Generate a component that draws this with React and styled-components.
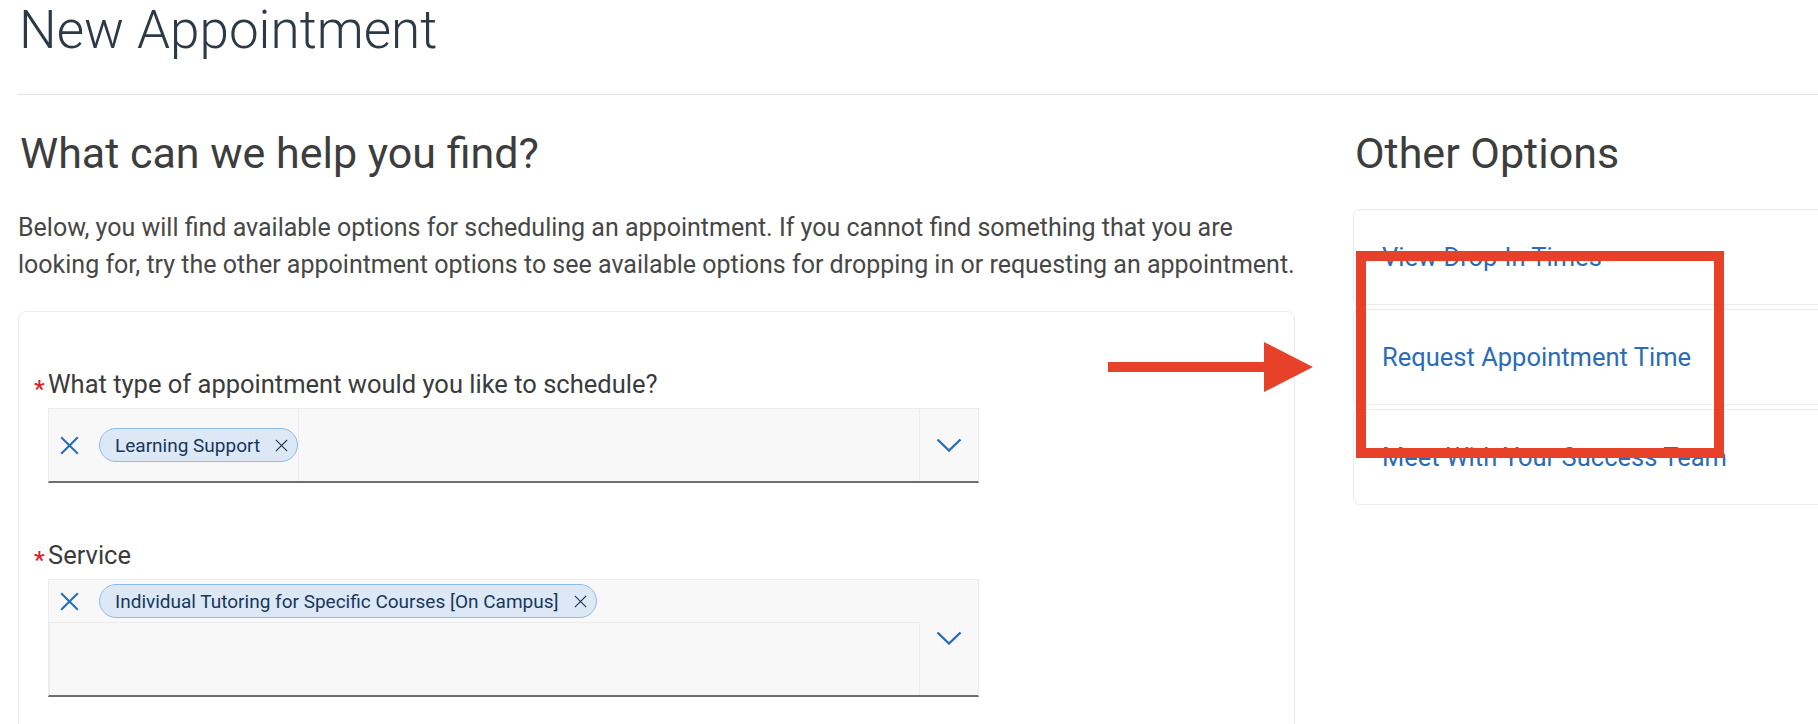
import React from "react";
import styled, { createGlobalStyle } from "styled-components";

const GlobalStyle = createGlobalStyle`
  html, body {
    margin: 0;
    padding: 0;
    background: #ffffff;
    overflow: hidden;
  }
  body {
    font-family: Roboto, "Liberation Sans", Arial, sans-serif;
    -webkit-font-smoothing: antialiased;
  }
  * { box-sizing: border-box; }
`;

const Page = styled.div`
  position: relative;
  width: 2000px;
  padding-left: 18px;
`;

const PageTitle = styled.h1`
  margin: 0;
  font-size: 53px;
  line-height: 60px;
  font-weight: 300;
  color: #2c3a47;
  padding-left: 1px;
`;

const Divider = styled.div`
  margin-top: 34px;
  height: 1px;
  background: #e1e1e1;
`;

const Columns = styled.div`
  display: grid;
  grid-template-columns: 1277px 560px;
  column-gap: 58px;
  padding-top: 32px;
`;

const Column = styled.section`
  display: flex;
  flex-direction: column;
`;

const SectionHeading = styled.h2`
  margin: 0;
  font-size: 43px;
  line-height: 52px;
  font-weight: 400;
  color: #3d3d3d;
  padding-left: 2px;
`;

const Intro = styled.p`
  margin: 30px 0 28px;
  font-size: 25px;
  line-height: 37px;
  color: #474747;
  white-space: nowrap;
`;

const FormCard = styled.div`
  border: 1px solid #ebebeb;
  border-radius: 8px;
  padding: 57px 0 60px 29px;
`;

const Field = styled.div`
  width: 931px;
  & + & {
    margin-top: 57px;
  }
`;

const Label = styled.label`
  display: flex;
  align-items: flex-start;
  margin-left: -14px;
  margin-bottom: 9px;
  font-size: 25.5px;
  line-height: 30px;
  color: #3b3b3b;
`;

const Required = styled.span`
  width: 14px;
  flex: none;
  color: #d8232a;
  font-size: 24px;
  font-weight: 500;
  line-height: 30px;
  position: relative;
  top: 5px;
`;

const SelectShell = styled.div`
  position: relative;
  display: flex;
  flex-wrap: wrap;
  align-items: center;
  background: #f8f8f8;
  border: 1px solid #ececec;
  border-bottom: 2px solid #6e6e6e;
  padding-right: 58px;
`;

const ClearButton = styled.span`
  display: inline-flex;
  width: 19px;
  height: 19px;
  margin: 0 20px 0 11px;
  color: #2a6ebb;
`;

const Chip = styled.span`
  display: inline-flex;
  align-items: center;
  gap: 15px;
  height: 34px;
  margin: 4px 0;
  padding: 0 9px 0 15px;
  border: 1px solid #8ebdea;
  border-radius: 17px;
  background: #dce8f6;
  color: #17375c;
  font-size: 19px;
  white-space: nowrap;
`;

const ChipRemove = styled.span`
  display: inline-flex;
  width: 13px;
  height: 13px;
  color: #1f3450;
`;

const TextEntry = styled.div`
  flex: 1 1 350px;
  align-self: stretch;
  height: ${(p) => (p.$wrapped ? "73px" : "72px")};
  border-left: 1px solid #ececec;
  border-right: 1px solid #ececec;
  border-top: ${(p) => (p.$wrapped ? "1px solid #ececec" : "none")};
`;

const Toggle = styled.span`
  position: absolute;
  top: 0;
  right: 0;
  bottom: 0;
  width: 58px;
  display: flex;
  align-items: center;
  justify-content: center;
  color: #2a6ebb;
`;

const OptionList = styled.div`
  margin-top: 30px;
  display: flex;
  flex-direction: column;
  gap: 4px;
`;

const OptionRow = styled.a`
  display: flex;
  align-items: center;
  height: 96px;
  padding-left: 28px;
  border: 1px solid #ebebeb;
  border-radius: 6px;
  font-size: 25.5px;
  color: #2b6cb5;
  text-decoration: none;
`;

const Highlight = styled.div`
  position: absolute;
  left: 1356px;
  top: 251px;
  width: 368px;
  height: 207px;
  border: 10px solid #e8412a;
  pointer-events: none;
`;

const Pointer = styled.svg`
  position: absolute;
  left: 1108px;
  top: 342px;
  pointer-events: none;
`;

const XIcon = ({ size, stroke }) => (
  <svg width={size} height={size} viewBox="0 0 20 20" fill="none">
    <path d="M2 2 L18 18 M18 2 L2 18" stroke="currentColor" strokeWidth={stroke} strokeLinecap="square" />
  </svg>
);

const Chevron = () => (
  <svg width="26" height="14" viewBox="0 0 26 14" fill="none">
    <path d="M1.5 1.5 L13 12.5 L24.5 1.5" stroke="currentColor" strokeWidth="2.4" />
  </svg>
);

const MultiSelect = ({ value, wrapped }) => (
  <SelectShell>
    <ClearButton>
      <XIcon size={19} stroke={2.2} />
    </ClearButton>
    <Chip>
      {value}
      <ChipRemove>
        <XIcon size={13} stroke={1.8} />
      </ChipRemove>
    </Chip>
    <TextEntry $wrapped={wrapped} />
    <Toggle>
      <Chevron />
    </Toggle>
  </SelectShell>
);

export default function App() {
  return (
    <>
      <GlobalStyle />
      <Page>
        <PageTitle>New Appointment</PageTitle>
        <Divider />
        <Columns>
          <Column>
            <SectionHeading>What can we help you find?</SectionHeading>
            <Intro>
              Below, you will find available options for scheduling an appointment. If you cannot find something that you are
              <br />
              looking for, try the other appointment options to see available options for dropping in or requesting an appointment.
            </Intro>
            <FormCard>
              <Field>
                <Label>
                  <Required>*</Required>
                  What type of appointment would you like to schedule?
                </Label>
                <MultiSelect value="Learning Support" />
              </Field>
              <Field>
                <Label>
                  <Required>*</Required>
                  Service
                </Label>
                <MultiSelect value="Individual Tutoring for Specific Courses [On Campus]" wrapped />
              </Field>
            </FormCard>
          </Column>
          <Column>
            <SectionHeading>Other Options</SectionHeading>
            <OptionList>
              <OptionRow>View Drop-In Times</OptionRow>
              <OptionRow>Request Appointment Time</OptionRow>
              <OptionRow>Meet With Your Success Team</OptionRow>
            </OptionList>
          </Column>
        </Columns>
        <Highlight />
        <Pointer width="205" height="50" viewBox="0 0 205 50">
          <rect x="0" y="20" width="157" height="10" fill="#e8412a" />
          <polygon points="156,0 205,25 156,50" fill="#e8412a" />
        </Pointer>
      </Page>
    </>
  );
}
